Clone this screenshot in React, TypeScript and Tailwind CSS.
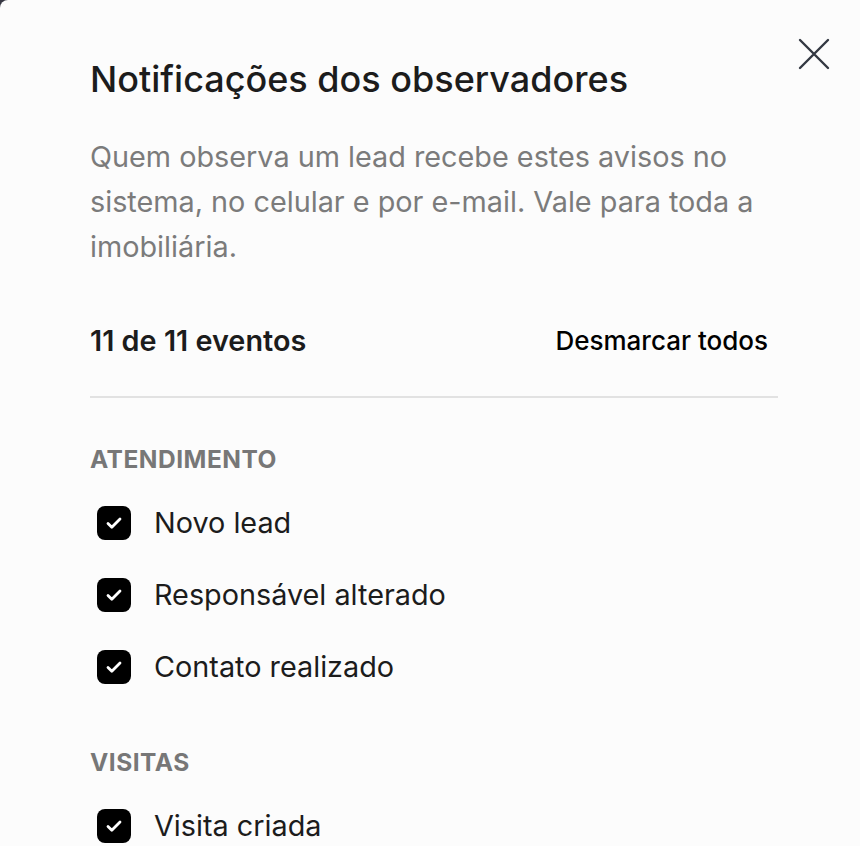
import { useState } from "react";

type Section = {
  title: string;
  items: string[];
};

const SECTIONS: Section[] = [
  { title: "Atendimento", items: ["Novo lead", "Responsável alterado", "Contato realizado"] },
  { title: "Visitas", items: ["Visita criada"] },
];

function CheckBox({ checked }: { checked: boolean }) {
  return (
    <span
      className={`flex h-[34px] w-[34px] shrink-0 items-center justify-center rounded-[8px] ${
        checked ? "bg-black" : "border-2 border-gray-400 bg-white"
      }`}
    >
      {checked && (
        <svg width="24" height="24" viewBox="0 0 24 24" fill="none">
          <path
            d="M6 12.5l3.8 3.8L18 8"
            stroke="white"
            strokeWidth="2.8"
            strokeLinecap="round"
            strokeLinejoin="round"
          />
        </svg>
      )}
    </span>
  );
}

export default function App() {
  const [checked, setChecked] = useState<Record<string, boolean>>({});
  const total = 11;
  const off = Object.values(checked).filter((v) => v === false).length;

  return (
    <div className="h-[846px] w-[860px] overflow-hidden bg-[#373843]">
      <div
        className="relative h-full w-full rounded-tl-[8px] bg-[#fcfcfc] pl-[90px] pr-[82px] text-[#1c1c1c]"
        style={{ fontFamily: "Inter, 'Noto Sans', sans-serif" }}
      >
        <button
          type="button"
          className="absolute right-[30px] top-[38px] flex h-[32px] w-[32px] items-center justify-center text-[#333842]"
        >
          <svg width="32" height="32" viewBox="0 0 32 32" fill="none">
            <path d="M2 2L30 30M30 2L2 30" stroke="currentColor" strokeWidth="2.4" strokeLinecap="round" />
          </svg>
        </button>

        <h2 className="pt-[57px] text-[36px] font-medium leading-[44px]">
          Notificações dos observadores
        </h2>
        <p className="mt-[33px] text-[28.8px] leading-[45px] text-[#7b7b7b]">
          Quem observa um lead recebe estes avisos no sistema, no celular e por e-mail. Vale para toda a
          imobiliária.
        </p>

        <div className="mt-[54px] flex items-center justify-between pr-[10px]">
          <span className="text-[28.8px] font-semibold leading-[36px]">
            {total - off} de {total} eventos
          </span>
          <button type="button" className="text-[26px] font-medium leading-[36px] text-black">
            Desmarcar todos
          </button>
        </div>
        <div className="mt-[37px] h-[2px] w-full bg-[#e2e2e2]" />

        {SECTIONS.map((s, i) => (
          <section key={s.title} className={i === 0 ? "mt-[46px]" : "mt-[44px]"}>
            <p className="text-[24.5px] font-bold uppercase leading-[30px] tracking-[0.5px] text-[#777777]">
              {s.title}
            </p>
            <ul className="mt-[13px]">
              {s.items.map((item) => {
                const on = checked[item] !== false;
                return (
                  <li
                    key={item}
                    className="flex h-[72px] cursor-pointer items-center gap-[23px] pl-[7px]"
                    onClick={() => setChecked({ ...checked, [item]: !on })}
                  >
                    <CheckBox checked={on} />
                    <span className="text-[28.8px] leading-[36px] text-[#1c1c1c]">{item}</span>
                  </li>
                );
              })}
            </ul>
          </section>
        ))}
      </div>
    </div>
  );
}
